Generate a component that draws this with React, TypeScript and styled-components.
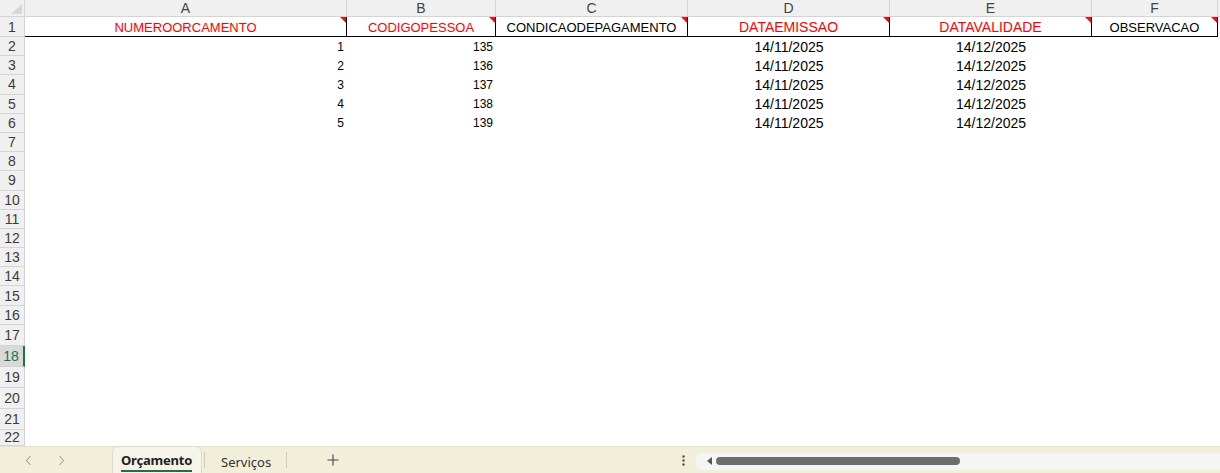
import React from 'react';
import styled, { createGlobalStyle } from 'styled-components';

const GlobalStyle = createGlobalStyle`
  html, body {
    margin: 0;
    padding: 0;
    background: #ffffff;
    overflow: hidden;
  }
  body {
    font-family: "Liberation Sans", Arial, sans-serif;
  }
`;

const COLUMNS = [
  { letter: 'A', width: 322 },
  { letter: 'B', width: 149 },
  { letter: 'C', width: 192 },
  { letter: 'D', width: 202 },
  { letter: 'E', width: 202 },
  { letter: 'F', width: 126 },
];

const HEADERS = [
  { text: 'NUMEROORCAMENTO', red: true, size: 13 },
  { text: 'CODIGOPESSOA', red: true, size: 13 },
  { text: 'CONDICAODEPAGAMENTO', red: false, size: 13 },
  { text: 'DATAEMISSAO', red: true, size: 14 },
  { text: 'DATAVALIDADE', red: true, size: 14 },
  { text: 'OBSERVACAO', red: false, size: 13 },
];

const DATA = [
  { id: 1, pessoa: 135 },
  { id: 2, pessoa: 136 },
  { id: 3, pessoa: 137 },
  { id: 4, pessoa: 138 },
  { id: 5, pessoa: 139 },
];

const rowHeight = (n: number) => {
  if (n === 1) return 20;
  if (n <= 16) return 19.2;
  if (n <= 21) return 21;
  return 16;
};

const Page = styled.div`
  width: 1220px;
  height: 473px;
  display: flex;
  flex-direction: column;
  overflow: hidden;
`;

const Sheet = styled.div`
  flex: 1;
  display: flex;
  flex-direction: column;
  overflow: hidden;
`;

const Row = styled.div<{ $h: number }>`
  display: flex;
  height: ${p => p.$h}px;
  flex-shrink: 0;
`;

const Corner = styled.div`
  width: 25px;
  flex-shrink: 0;
  box-sizing: border-box;
  background: #f0f0f0;
  border-right: 1px solid #d4d4d4;
  border-bottom: 1px solid #d4d4d4;
  display: flex;
  align-items: flex-end;
  justify-content: flex-end;
  padding: 0 2px 2px 0;
`;

const ColHeader = styled.div<{ $w: number }>`
  width: ${p => p.$w}px;
  flex-shrink: 0;
  box-sizing: border-box;
  background: #f0f0f0;
  border-right: 1px solid #d4d4d4;
  border-bottom: 1px solid #d4d4d4;
  color: #444;
  font-size: 14px;
  line-height: 16px;
  text-align: center;
`;

const HeaderFill = styled.div`
  flex: 1;
  background: #f0f0f0;
  border-bottom: 1px solid #d4d4d4;
`;

const RowHeader = styled.div<{ $selected?: boolean }>`
  width: 25px;
  flex-shrink: 0;
  box-sizing: border-box;
  background: ${p => (p.$selected ? '#d9d9d9' : '#f0f0f0')};
  border-right: ${p => (p.$selected ? '2px solid #1e7145' : '1px solid #d4d4d4')};
  border-bottom: 1px solid #d4d4d4;
  color: ${p => (p.$selected ? '#1e7145' : '#3c3c3c')};
  font-size: 14px;
  display: flex;
  align-items: center;
  justify-content: center;
  padding-right: ${p => (p.$selected ? '1px' : '0')};
`;

const Cell = styled.div<{ $w: number; $align?: string; $size?: number }>`
  width: ${p => p.$w}px;
  flex-shrink: 0;
  box-sizing: border-box;
  display: flex;
  align-items: center;
  justify-content: ${p => p.$align || 'flex-start'};
  padding: 0 3px;
  font-size: ${p => p.$size || 12}px;
  color: #000;
  white-space: nowrap;
`;

const TitleCell = styled.div<{ $w: number; $red: boolean; $size: number }>`
  position: relative;
  width: ${p => p.$w}px;
  flex-shrink: 0;
  box-sizing: border-box;
  border-right: 1px solid #000;
  border-bottom: 1px solid #000;
  display: flex;
  align-items: center;
  justify-content: center;
  padding-top: 1px;
  font-size: ${p => p.$size}px;
  color: ${p => (p.$red ? '#ff0000' : '#000')};
  white-space: nowrap;
`;

const CommentMark = styled.span`
  position: absolute;
  top: 0;
  right: 0;
  width: 6px;
  height: 6px;
  background: #e8101c;
  clip-path: polygon(0 0, 100% 0, 100% 100%);
`;

const TabBar = styled.div`
  height: 27px;
  flex-shrink: 0;
  box-sizing: border-box;
  background: #f1eed9;
  border-top: 1px solid #e3e0cd;
  display: flex;
  align-items: stretch;
  font-family: "Noto Sans", "Open Sans", sans-serif;
`;

const NavArrows = styled.div`
  width: 112px;
  flex-shrink: 0;
  display: flex;
  align-items: center;
  gap: 26px;
  padding-left: 25px;
  box-sizing: border-box;
`;

const ActiveTab = styled.div`
  width: 90px;
  flex-shrink: 0;
  margin-top: -1px;
  box-sizing: border-box;
  background: #f6f4e8;
  border: 1px solid #dedbc8;
  border-bottom: none;
  border-radius: 6px 6px 0 0;
  display: flex;
  align-items: center;
  padding-left: 8px;
`;

const TabLabel = styled.span<{ $active?: boolean }>`
  font-size: 13px;
  font-weight: ${p => (p.$active ? 700 : 400)};
  color: ${p => (p.$active ? '#222' : '#333')};
  letter-spacing: ${p => (p.$active ? '-0.2px' : '0')};
  padding-top: 3px;
  padding-bottom: ${p => (p.$active ? '1px' : '0')};
  border-bottom: ${p => (p.$active ? '2px solid #1e7145' : 'none')};
`;

const TabSep = styled.div`
  width: 1px;
  height: 16px;
  align-self: center;
  background: #cfccbb;
  margin: 0 2px;
`;

const Tab = styled.div`
  display: flex;
  align-items: center;
  padding: 0 13px 0 14px;
`;

const AddButton = styled.div`
  display: flex;
  align-items: center;
  padding-left: 38px;
  width: 387px;
  box-sizing: border-box;
`;

const MoreDots = styled.div`
  width: 14px;
  display: flex;
  align-items: center;
  justify-content: center;
`;

const ScrollArea = styled.div`
  flex: 1;
  display: flex;
  align-items: center;
  padding-left: 5px;
`;

const ScrollTrack = styled.div`
  flex: 1;
  height: 17px;
  margin-top: 2px;
  background: #f5f5f3;
  border-radius: 9px 0 0 9px;
  display: flex;
  align-items: center;
  padding-left: 12px;
  gap: 4px;
`;

const ScrollThumb = styled.div`
  width: 244px;
  height: 8px;
  border-radius: 4px;
  background: #6d6d6d;
`;

const Chevron = ({ dir }: { dir: 'left' | 'right' }) => (
  <svg width="7" height="11" viewBox="0 0 7 11">
    <path
      d={dir === 'left' ? 'M5.5 1 1.5 5.5 5.5 10' : 'M1.5 1 5.5 5.5 1.5 10'}
      fill="none"
      stroke="#a3a3a3"
      strokeWidth="1.1"
    />
  </svg>
);

export default function App() {
  const rows = Array.from({ length: 22 }, (_, i) => i + 1);

  return (
    <Page>
      <GlobalStyle />
      <Sheet>
        <Row $h={17}>
          <Corner>
            <svg width="11" height="10" viewBox="0 0 11 10">
              <path d="M11 0V10H0Z" fill="#d6d6d6" />
            </svg>
          </Corner>
          {COLUMNS.map(c => (
            <ColHeader key={c.letter} $w={c.width}>
              {c.letter}
            </ColHeader>
          ))}
          <HeaderFill />
        </Row>

        {rows.map(n => {
          const h = rowHeight(n);
          const item = DATA[n - 2];
          return (
            <Row key={n} $h={h}>
              <RowHeader $selected={n === 18}>{n}</RowHeader>
              {n === 1 &&
                HEADERS.map((hd, i) => (
                  <TitleCell key={hd.text} $w={COLUMNS[i].width} $red={hd.red} $size={hd.size}>
                    {hd.text}
                    <CommentMark />
                  </TitleCell>
                ))}
              {item && (
                <>
                  <Cell $w={COLUMNS[0].width} $align="flex-end">{item.id}</Cell>
                  <Cell $w={COLUMNS[1].width} $align="flex-end">{item.pessoa}</Cell>
                  <Cell $w={COLUMNS[2].width} />
                  <Cell $w={COLUMNS[3].width} $align="center" $size={14}>14/11/2025</Cell>
                  <Cell $w={COLUMNS[4].width} $align="center" $size={14}>14/12/2025</Cell>
                  <Cell $w={COLUMNS[5].width} />
                </>
              )}
            </Row>
          );
        })}
      </Sheet>

      <TabBar>
        <NavArrows>
          <Chevron dir="left" />
          <Chevron dir="right" />
        </NavArrows>
        <ActiveTab>
          <TabLabel $active>Orçamento</TabLabel>
        </ActiveTab>
        <TabSep />
        <Tab>
          <TabLabel>Serviços</TabLabel>
        </Tab>
        <TabSep />
        <AddButton>
          <svg width="12" height="12" viewBox="0 0 12 12">
            <path d="M6 0.5V11.5M0.5 6H11.5" stroke="#444" strokeWidth="1.1" />
          </svg>
        </AddButton>
        <MoreDots>
          <svg width="3" height="11" viewBox="0 0 3 11">
            <rect x="0.5" y="0.5" width="2" height="2" fill="#333" />
            <rect x="0.5" y="4.5" width="2" height="2" fill="#333" />
            <rect x="0.5" y="8.5" width="2" height="2" fill="#333" />
          </svg>
        </MoreDots>
        <ScrollArea>
          <ScrollTrack>
            <svg width="5" height="8" viewBox="0 0 5 8">
              <path d="M5 0V8L0 4Z" fill="#555" />
            </svg>
            <ScrollThumb />
          </ScrollTrack>
        </ScrollArea>
      </TabBar>
    </Page>
  );
}
